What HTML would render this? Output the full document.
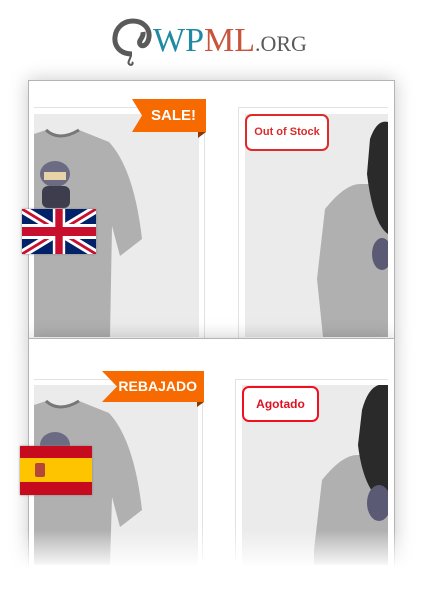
<!DOCTYPE html>
<html style="width:421px;height:589px;overflow:hidden"><head><meta charset="utf-8"><style>
*{margin:0;padding:0;box-sizing:border-box}
body{width:421px;height:589px;background:#fff;position:relative;overflow:hidden;font-family:"Liberation Sans",sans-serif}
.abs{position:absolute}
.panel{position:absolute;left:28px;width:367px;background:#fff;border:1px solid #b4b4b4;box-shadow:0 0 18px rgba(0,0,0,.22)}
.img{position:absolute;background:#ebebeb;overflow:hidden}
.badge{position:absolute;border:2px solid #e02a2a;border-radius:7px;color:#dc2a2a;font-weight:bold;font-size:11px;background:#fff;text-align:center}
.rib{position:absolute;background:#f66a00;color:#fff;font-weight:bold;text-align:right}
</style></head><body>

<!-- logo -->
<svg class="abs" style="left:110px;top:18px" width="44" height="50" viewBox="0 0 44 50">
<path d="M22 36 C10 36 4 28 5 19 C6 9 14 3 23 3 C33 3 40 10 39 19 C38 27 32 30 30 26 C28 22 34 20 33 14" fill="none" stroke="#5a5a5a" stroke-width="5"/>
<path d="M21 36 C21 41 17 44 19 46 C21 48 24 46 22 44" fill="none" stroke="#5a5a5a" stroke-width="2"/>
</svg>
<div class="abs" style="left:153px;top:24px;font-family:'Liberation Serif',serif;font-size:34px;line-height:34px;white-space:nowrap"><span style="color:#1f8aa3">WP</span><span style="color:#c8553b">ML</span><span style="color:#5a5a5a;font-size:22px">.ORG</span></div>

<!-- top panel -->
<div class="panel" style="top:80px;height:259px"></div>
<div class="abs" style="left:34px;top:107px;width:170px;height:1px;background:#e2e2e2"></div>
<div class="abs" style="left:204px;top:107px;width:1px;height:231px;background:#e2e2e2"></div>
<div class="abs" style="left:238px;top:107px;width:150px;height:1px;background:#e2e2e2"></div>
<div class="abs" style="left:238px;top:107px;width:1px;height:231px;background:#e2e2e2"></div>
<div class="img" style="left:34px;top:114px;width:165px;height:223px">
<svg width="165" height="223"><path d="M0 20 L12 16 Q25 28 45 16 L75 28 Q100 55 108 125 L86 142 L78 112 L76 223 L0 223 Z" fill="#b0b0b0"/>
<path d="M12 16 Q25 28 45 16" fill="none" stroke="#777" stroke-width="3"/>
<ellipse cx="21" cy="60" rx="15" ry="13" fill="#6b6b84"/><rect x="10" y="58" width="22" height="8" fill="#e8d2a8"/><rect x="8" y="72" width="28" height="22" rx="6" fill="#3d3d4d"/></svg>
</div>
<div class="img" style="left:245px;top:114px;width:143px;height:223px">
<svg width="143" height="223"><path d="M80 95 Q100 70 115 70 L143 70 L143 223 L78 223 L72 165 Z" fill="#b0b0b0"/>
<path d="M125 25 Q132 5 143 8 L143 120 Q128 110 122 60 Z" fill="#2a2a2a"/>
<ellipse cx="137" cy="140" rx="10" ry="16" fill="#5a5a75"/></svg>
</div>
<div class="rib" style="left:132px;top:99px;width:74px;height:33px;clip-path:polygon(0 0,100% 0,100% 100%,0 100%,10px 50%);font-size:15px;line-height:33px;padding-right:10px">SALE!</div>
<div class="abs" style="left:198px;top:132px;width:0;height:0;border-left:8px solid #8a3a00;border-bottom:6px solid transparent"></div>
<div class="badge" style="left:245px;top:114px;width:84px;height:37px;line-height:33px">Out of Stock</div>
<svg class="abs" style="left:22px;top:209px;box-shadow:0 0 2px #888" width="74" height="45" viewBox="0 0 60 30" preserveAspectRatio="none">
<rect width="60" height="30" fill="#012169"/><path d="M0 0L60 30M60 0L0 30" stroke="#fff" stroke-width="6"/><path d="M0 0L60 30M60 0L0 30" stroke="#C8102E" stroke-width="2"/><path d="M30 0V30M0 15H60" stroke="#fff" stroke-width="10"/><path d="M30 0V30M0 15H60" stroke="#C8102E" stroke-width="6"/></svg>

<!-- bottom panel -->
<div class="panel" style="top:338px;height:240px;border-bottom:none"></div>
<div class="abs" style="left:34px;top:379px;width:170px;height:1px;background:#e2e2e2"></div>
<div class="abs" style="left:202px;top:379px;width:1px;height:180px;background:#e2e2e2"></div>
<div class="abs" style="left:235px;top:379px;width:153px;height:1px;background:#e2e2e2"></div>
<div class="abs" style="left:235px;top:379px;width:1px;height:180px;background:#e2e2e2"></div>
<div class="img" style="left:34px;top:385px;width:164px;height:180px">
<svg width="164" height="180"><path d="M0 20 L12 16 Q25 28 45 16 L75 28 Q100 55 108 125 L86 142 L78 112 L76 180 L0 180 Z" fill="#b0b0b0"/>
<path d="M12 16 Q25 28 45 16" fill="none" stroke="#777" stroke-width="3"/>
<ellipse cx="21" cy="60" rx="15" ry="13" fill="#6b6b84"/></svg>
</div>
<div class="img" style="left:242px;top:385px;width:146px;height:180px">
<svg width="146" height="180"><path d="M80 95 Q100 70 115 70 L146 70 L146 180 L72 180 L72 165 Z" fill="#b0b0b0"/>
<path d="M120 25 Q128 -5 146 0 L146 120 Q122 110 116 60 Z" fill="#2a2a2a"/>
<ellipse cx="137" cy="118" rx="12" ry="18" fill="#5a5a75"/></svg>
</div>
<div class="rib" style="left:102px;top:371px;width:102px;height:31px;clip-path:polygon(0 0,100% 0,100% 100%,0 100%,15px 50%);font-size:14px;line-height:31px;padding-right:7px">REBAJADO</div>
<div class="abs" style="left:197px;top:402px;width:0;height:0;border-left:7px solid #8a3a00;border-bottom:5px solid transparent"></div>
<div class="badge" style="left:242px;top:386px;width:77px;height:36px;line-height:32px;font-size:12px;border-color:#f01020;color:#e01020">Agotado</div>
<svg class="abs" style="left:20px;top:446px;box-shadow:0 0 2px #888" width="72" height="49" viewBox="0 0 72 49">
<rect width="72" height="49" fill="#c60b1e"/><rect y="12" width="72" height="24" fill="#ffc400"/><rect x="15" y="17" width="10" height="14" rx="2" fill="#b5473a"/></svg>

<div class="abs" style="left:0;top:530px;width:421px;height:59px;background:linear-gradient(rgba(255,255,255,0),#fff 65%)"></div>
</body></html>
